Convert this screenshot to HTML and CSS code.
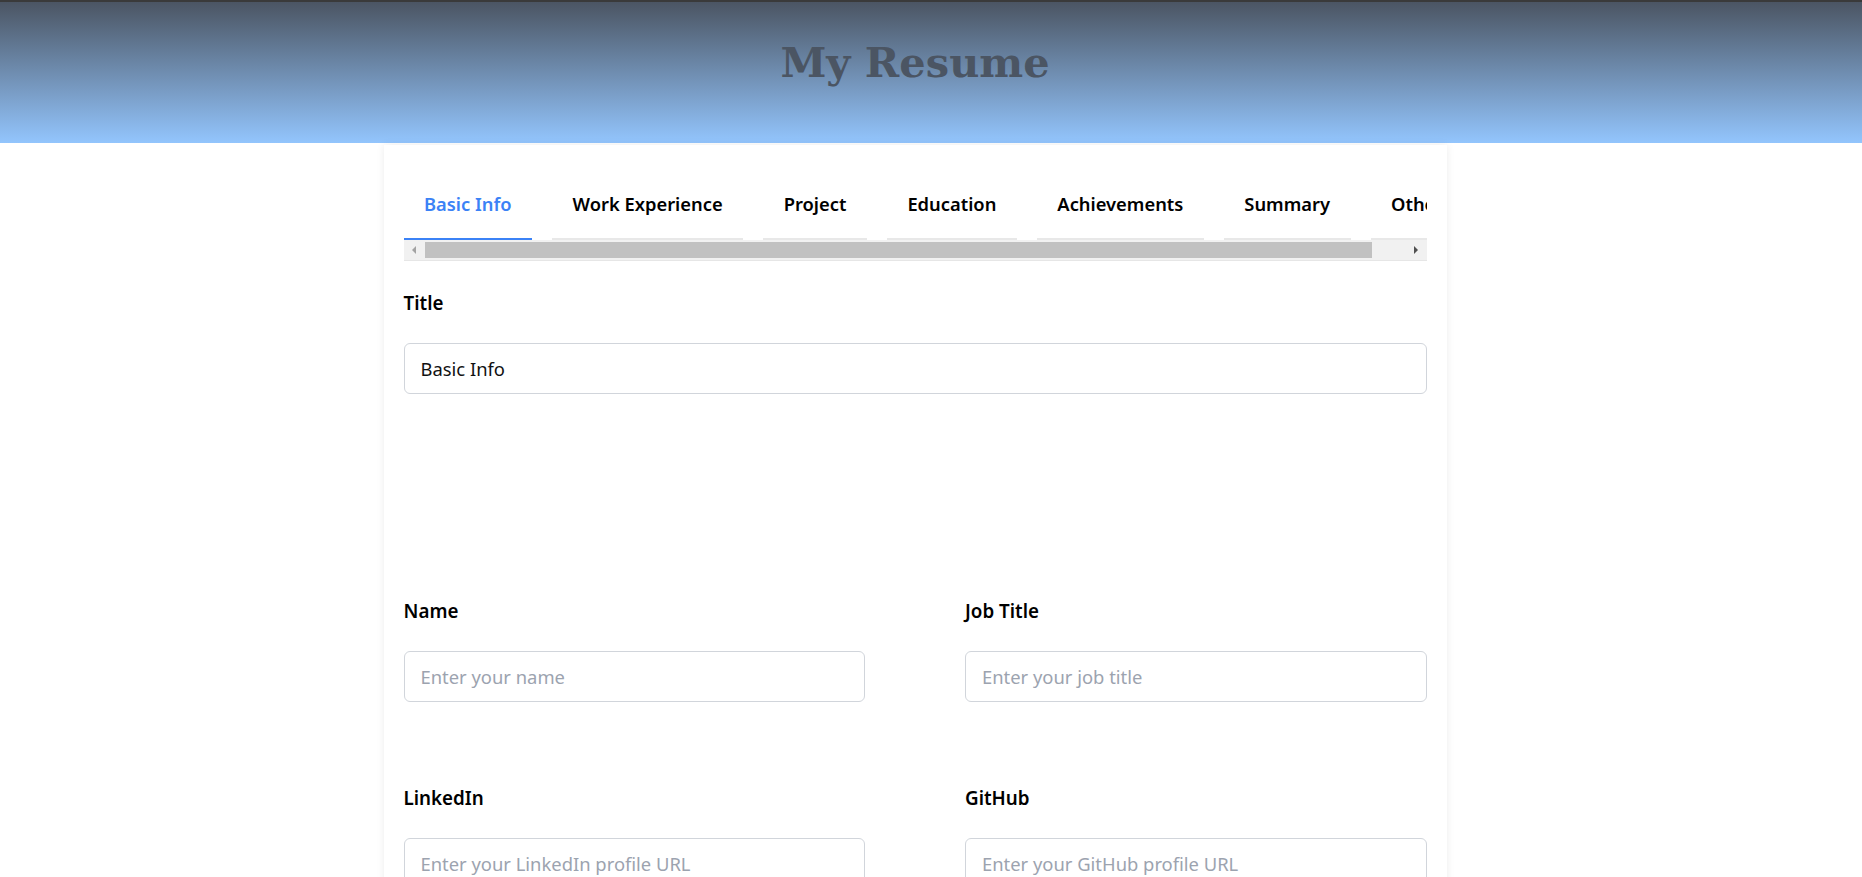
FILE: index.html
```html
<!DOCTYPE html>
<html lang="en">
<head>
<meta charset="utf-8">
<title>My Resume</title>
<link rel="stylesheet" href="styles.css">
</head>
<body>
<header class="site-header">
  <h1 class="site-title">My Resume</h1>
</header>
<main class="page">
  <section class="card">
    <div class="tabs-wrap">
      <nav class="tabs">
        <button class="tab tab--active">Basic Info</button>
        <button class="tab">Work Experience</button>
        <button class="tab">Project</button>
        <button class="tab">Education</button>
        <button class="tab">Achievements</button>
        <button class="tab">Summary</button>
        <button class="tab">Others</button>
      </nav>
      <div class="hscroll">
        <span class="hscroll-btn"><span class="arrow arrow--left"></span></span>
        <div class="hscroll-track"><div class="hscroll-thumb"></div></div>
        <span class="hscroll-btn"><span class="arrow arrow--right"></span></span>
      </div>
    </div>

    <div class="field field--title">
      <label class="field-label">Title</label>
      <input class="field-input" type="text" value="Basic Info">
    </div>

    <div class="field-row field-row--first">
      <div class="field field--half">
        <label class="field-label">Name</label>
        <input class="field-input" type="text" placeholder="Enter your name">
      </div>
      <div class="field field--half">
        <label class="field-label">Job Title</label>
        <input class="field-input" type="text" placeholder="Enter your job title">
      </div>
    </div>

    <div class="field-row">
      <div class="field field--half">
        <label class="field-label">LinkedIn</label>
        <input class="field-input" type="text" placeholder="Enter your LinkedIn profile URL">
      </div>
      <div class="field field--half">
        <label class="field-label">GitHub</label>
        <input class="field-input" type="text" placeholder="Enter your GitHub profile URL">
      </div>
    </div>
  </section>
</main>
</body>
</html>
```

FILE: styles.css
```css
html, body {
  margin: 0;
  padding: 0;
  background: #ffffff;
  font-family: "Noto Sans", "Open Sans", sans-serif;
  color: #000;
}

.site-header {
  box-sizing: border-box;
  height: 143px;
  border-top: 2px solid #3a3a3a;
  background: linear-gradient(to bottom, #4b5563, #93c5fd);
  padding: 37px 32px 0 0;
  text-align: center;
}

.site-title {
  margin: 0;
  font-family: "DejaVu Serif", Georgia, serif;
  font-weight: bold;
  font-size: 41.5px;
  line-height: 48px;
  color: #4b5563;
}

.page {
  padding-right: 32px;
}

.card {
  box-sizing: border-box;
  width: 1063px;
  margin: 2px auto 0;
  padding: 20px 20px 40px;
  background: #fff;
  box-shadow: 0 0 8px rgba(0, 0, 0, 0.08);
  min-height: 760px;
}

.tabs-wrap {
  overflow: hidden;
}

.tabs {
  display: flex;
  gap: 20px;
  overflow: hidden;
  white-space: nowrap;
}

.tab {
  flex-shrink: 0;
  margin: 0;
  border: 0;
  border-bottom: 2px solid #e8e8e8;
  background: none;
  padding: 26px 20.5px 22px;
  font-family: inherit;
  font-size: 18.33px;
  font-weight: 600;
  line-height: 25px;
  color: #000;
  cursor: pointer;
}

.tab--active {
  color: #3b82f6;
  border-bottom-color: #3b82f6;
}

.hscroll {
  display: flex;
  height: 21px;
  background: #f1f1f1;
  border-bottom: 1px solid #e6e6e6;
  box-sizing: border-box;
}

.hscroll-btn {
  width: 21px;
  flex-shrink: 0;
  display: flex;
  align-items: center;
  justify-content: center;
}

.arrow {
  width: 0;
  height: 0;
  border-top: 4px solid transparent;
  border-bottom: 4px solid transparent;
}

.arrow--left {
  border-right: 4px solid #a3a3a3;
}

.arrow--right {
  border-left: 4px solid #505050;
}

.hscroll-track {
  flex: 1;
  padding: 2px 0;
  box-sizing: border-box;
}

.hscroll-thumb {
  width: 947px;
  height: 100%;
  background: #c1c1c1;
}

.field {
  display: flex;
  flex-direction: column;
}

.field--title {
  margin-top: 29px;
}

.field-label {
  font-size: 18.8px;
  font-weight: 600;
  line-height: 26px;
  margin-bottom: 27px;
}

.field-input {
  box-sizing: border-box;
  width: 100%;
  height: 51px;
  border: 1px solid #d1d5db;
  border-radius: 6px;
  padding: 0 16px;
  font-family: inherit;
  font-size: 18.4px;
  color: #111;
  background: #fff;
  outline: none;
}

.field-input::placeholder {
  color: #9ca3af;
}

.field-row {
  display: flex;
  justify-content: space-between;
  margin-top: 83px;
}

.field-row--first {
  margin-top: 204px;
}

.field--half {
  width: calc(50% - 50px);
}
```
